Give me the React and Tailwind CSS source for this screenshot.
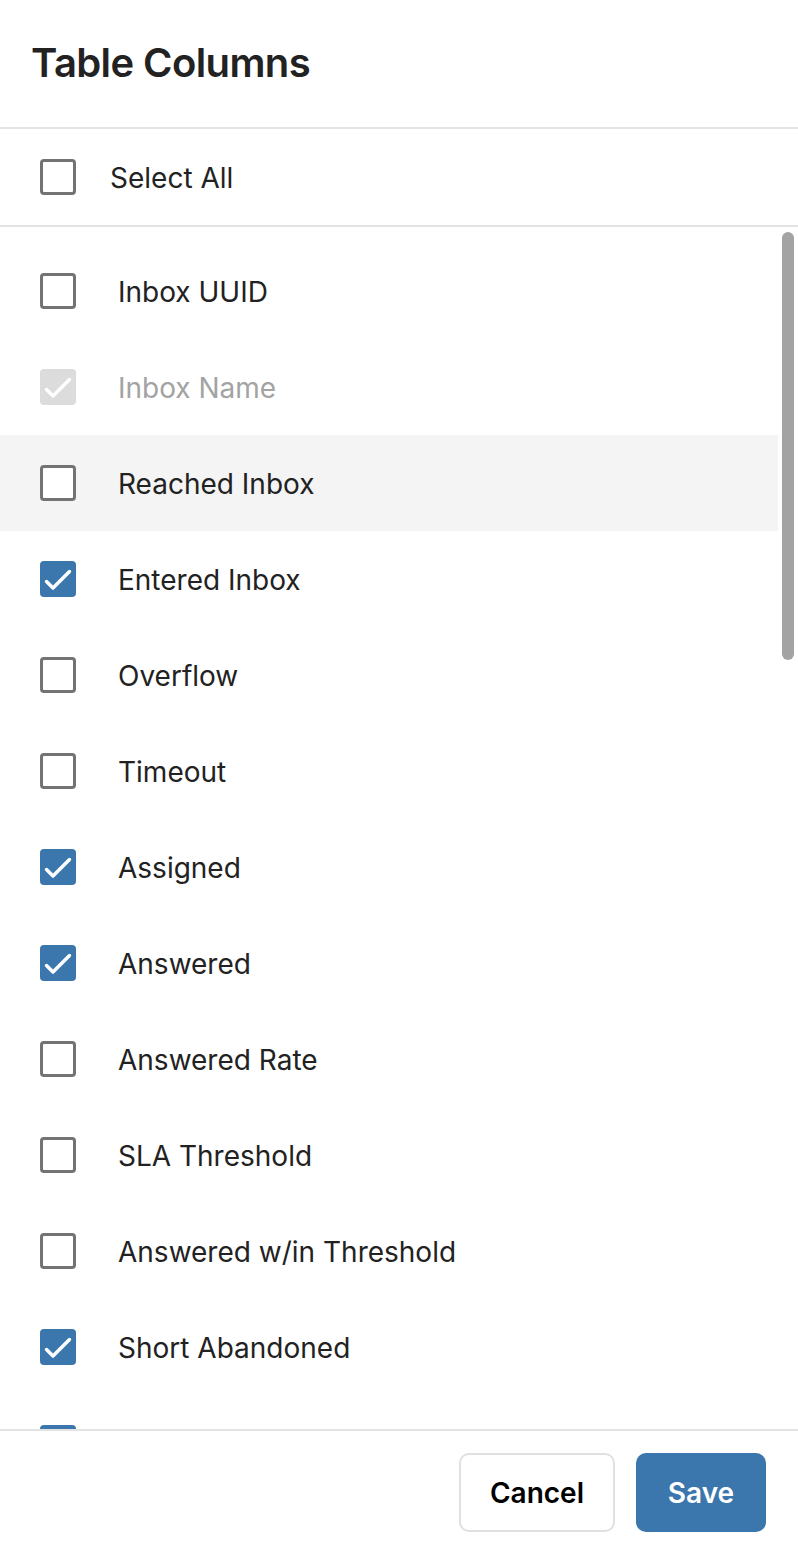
import React, { useState } from 'react';

const COLUMNS = [
  { label: 'Inbox UUID', checked: false },
  { label: 'Inbox Name', checked: true, disabled: true },
  { label: 'Reached Inbox', checked: false, hover: true },
  { label: 'Entered Inbox', checked: true },
  { label: 'Overflow', checked: false },
  { label: 'Timeout', checked: false },
  { label: 'Assigned', checked: true },
  { label: 'Answered', checked: true },
  { label: 'Answered Rate', checked: false },
  { label: 'SLA Threshold', checked: false },
  { label: 'Answered w/in Threshold', checked: false },
  { label: 'Short Abandoned', checked: true },
  { label: 'Abandoned', checked: true },
];

const Check = () => (
  <svg width="36" height="36" viewBox="0 0 36 36" fill="none">
    <path d="M6.5 20.5l6.5 6.5L29.5 10.5" stroke="#fff" strokeWidth="3.5" strokeLinecap="round" strokeLinejoin="round" />
  </svg>
);

function Box({ checked, disabled }) {
  if (disabled) {
    return (
      <span className="w-[36px] h-[36px] rounded-[4px] bg-[#dcdcdc] flex items-center justify-center shrink-0">
        <Check />
      </span>
    );
  }
  if (checked) {
    return (
      <span className="w-[36px] h-[36px] rounded-[4px] bg-[#3b76ad] flex items-center justify-center shrink-0">
        <Check />
      </span>
    );
  }
  return <span className="w-[36px] h-[36px] rounded-[4px] border-[3px] border-[#737373] bg-white shrink-0" />;
}

export default function App() {
  const [cols] = useState(COLUMNS);

  return (
    <div className="w-[798px] h-[1556px] bg-white flex flex-col text-[#222] font-['Inter','Liberation_Sans',sans-serif]">
      {/* Header */}
      <div className="h-[129px] shrink-0 border-b-2 border-[#e3e3e3] px-[31px] flex items-center">
        <h1 className="text-[40px] font-semibold tracking-[-0.6px] pb-[1px]">Table Columns</h1>
      </div>

      {/* Select all */}
      <div className="h-[98px] shrink-0 border-b-2 border-[#e3e3e3] flex items-center pl-[40px]">
        <Box checked={false} />
        <span className="ml-[34px] mt-[2px] text-[28px]">Select All</span>
      </div>

      {/* List */}
      <div className="flex-1 min-h-0 flex overflow-hidden">
        <div className="flex-1 pt-[16px]">
          {cols.map((c) => (
            <div
              key={c.label}
              className={`h-[96px] flex items-center pl-[40px] ${c.hover ? 'bg-[#f4f4f4]' : ''}`}
            >
              <Box checked={c.checked} disabled={c.disabled} />
              <span className={`ml-[42px] mt-[2px] text-[28px] ${c.disabled ? 'text-[#a3a3a3]' : ''}`}>{c.label}</span>
            </div>
          ))}
        </div>
        <div className="w-[20px] shrink-0 pt-[5px] pl-[4px]">
          <div className="w-[12px] h-[428px] rounded-full bg-[#a3a3a3]" />
        </div>
      </div>

      {/* Footer */}
      <div className="h-[127px] shrink-0 border-t-2 border-[#e3e3e3] flex items-center justify-end gap-[21px] pr-[32px] pb-[2px]">
        <button className="w-[156px] h-[79px] rounded-[10px] border-2 border-[#e0e0e0] bg-white text-[28px] font-semibold text-black">
          Cancel
        </button>
        <button className="w-[130px] h-[79px] rounded-[10px] bg-[#3b76ad] text-[28px] font-semibold text-white">
          Save
        </button>
      </div>
    </div>
  );
}
